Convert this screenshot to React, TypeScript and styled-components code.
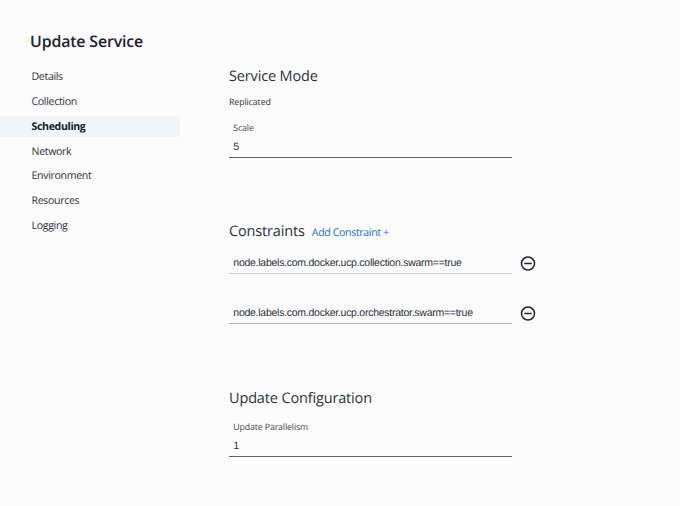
import React from 'react';
import styled, { createGlobalStyle } from 'styled-components';

const Global = createGlobalStyle`
  * { box-sizing: border-box; }
  body { margin: 0; background: #fbfbfb; }
`;

const Page = styled.div`
  width: 680px;
  height: 506px;
  overflow: hidden;
  display: flex;
  background: #fbfbfb;
  color: #2b323d;
  font-family: "Open Sans", "Noto Sans", sans-serif;
  text-rendering: geometricPrecision;
`;

const Sidebar = styled.aside`
  width: 180px;
  padding-top: 29px;
`;

const Title = styled.h1`
  margin: 0 0 13px;
  padding-left: 30px;
  font-size: 15.9px;
  letter-spacing: -0.15px;
  line-height: 24px;
  font-weight: 600;
  white-space: nowrap;
  color: #1c2430;
`;

const Nav = styled.nav`
  display: flex;
  flex-direction: column;
  gap: 3.85px;
`;

const NavItem = styled.a<{ $active?: boolean }>`
  height: 21px;
  padding-left: 31.5px;
  font-size: 10.6px;
  letter-spacing: ${p => (p.$active ? '-0.36px' : '-0.34px')};
  line-height: 23px;
  font-weight: ${p => (p.$active ? 700 : 400)};
  color: ${p => (p.$active ? '#141d28' : '#2b323d')};
  background: ${p => (p.$active ? '#eff5f8' : 'transparent')};
  border-radius: 0 2px 2px 0;
`;

const Main = styled.main`
  width: 320px;
  margin-left: 49px;
  padding-top: 66px;
`;

const Section = styled.section<{ $height: number }>`
  height: ${p => p.$height}px;
`;

const Heading = styled.h2`
  margin: 0;
  font-size: 14.5px;
  letter-spacing: -0.15px;
  line-height: 22px;
  font-weight: 400;
`;

const HeadingRow = styled.div`
  display: flex;
  align-items: baseline;
  gap: 7px;
`;

const AddLink = styled.a`
  font-size: 10.6px;
  letter-spacing: -0.36px;
  color: #1a70cf;
`;

const Mode = styled.p`
  margin: 6px 0 0;
  font-size: 8.8px;
  letter-spacing: -0.1px;
  line-height: 16px;
`;

const Field = styled.div<{ $top: number }>`
  width: 283px;
  margin-top: ${p => p.$top}px;
  padding: 0 4.3px;
  border-bottom: 1px solid #5f6266;
`;

const Label = styled.div`
  font-size: 8.8px;
  letter-spacing: -0.14px;
  line-height: 14px;
  color: #3f4854;
`;

const Value = styled.div`
  height: 22px;
  font: 10.7px/24px "Liberation Sans", Arial, sans-serif;
`;

const Constraint = styled.div<{ $top: number }>`
  display: flex;
  align-items: flex-start;
  gap: 8px;
  margin-top: ${p => p.$top}px;
`;

const ConstraintValue = styled.div<{ $line: string }>`
  width: 283px;
  height: 22px;
  padding-left: 4.3px;
  border-bottom: 1px solid ${p => p.$line};
  font: 10.5px/23px "Liberation Sans", Arial, sans-serif;
  letter-spacing: -0.26px;
`;

const RemoveButton = styled.button`
  display: flex;
  padding: 0;
  margin-top: 4px;
  border: 0;
  background: none;
  color: #1c2430;
`;

const RemoveIcon = () => (
  <svg width="16" height="16" viewBox="0 0 16 16" fill="none" stroke="currentColor" strokeWidth="1.5">
    <circle cx="8" cy="7.5" r="6.5" />
    <path d="M4.3 7.5h7.4" />
  </svg>
);

const navItems = ['Details', 'Collection', 'Scheduling', 'Network', 'Environment', 'Resources', 'Logging'];
const constraints = [
  { text: 'node.labels.com.docker.ucp.collection.swarm==true', line: '#cfd1d4' },
  { text: 'node.labels.com.docker.ucp.orchestrator.swarm==true', line: '#b5b7ba' },
];

export default function App() {
  return (
    <Page>
      <Global />
      <Sidebar>
        <Title>Update Service</Title>
        <Nav>
          {navItems.map(n => (
            <NavItem key={n} $active={n === 'Scheduling'}>{n}</NavItem>
          ))}
        </Nav>
      </Sidebar>
      <Main>
        <Section $height={155}>
          <Heading>Service Mode</Heading>
          <Mode>Replicated</Mode>
          <Field $top={11}>
            <Label>Scale</Label>
            <Value>5</Value>
          </Field>
        </Section>
        <Section $height={167}>
          <HeadingRow>
            <Heading>Constraints</Heading>
            <AddLink>Add Constraint +</AddLink>
          </HeadingRow>
          {constraints.map((c, i) => (
            <Constraint key={c.text} $top={i === 0 ? 9 : 28}>
              <ConstraintValue $line={c.line}>{c.text}</ConstraintValue>
              <RemoveButton aria-label="Remove constraint"><RemoveIcon /></RemoveButton>
            </Constraint>
          ))}
        </Section>
        <Section $height={118}>
          <Heading>Update Configuration</Heading>
          <Field $top={10}>
            <Label>Update Parallelism</Label>
            <Value>1</Value>
          </Field>
        </Section>
      </Main>
    </Page>
  );
}
